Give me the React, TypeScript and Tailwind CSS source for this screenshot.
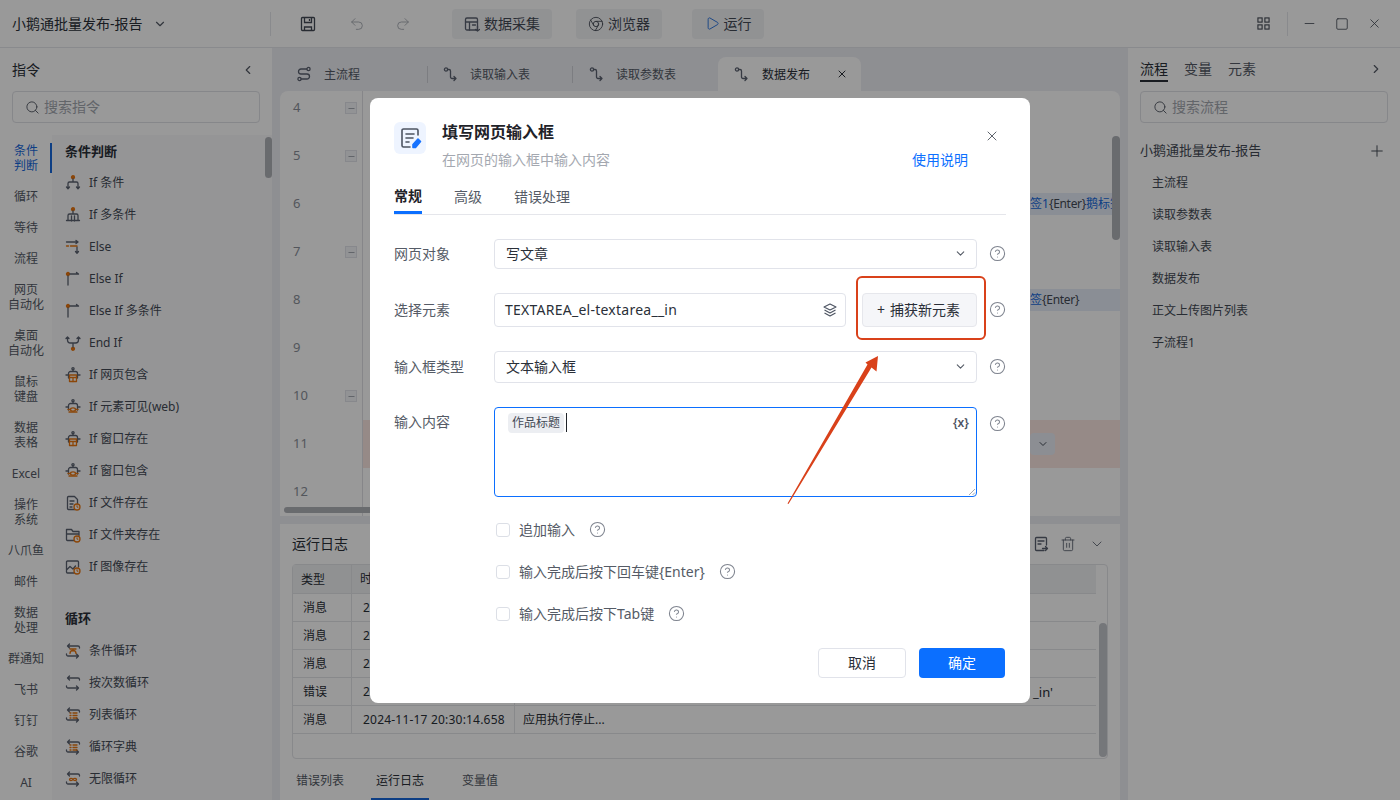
import React from "react";
import { ChevronDown, ChevronLeft, ChevronRight, Search, X, Minus, Square, Plus, CircleHelp, Undo2, Redo2, Trash2, Play, Chrome } from "lucide-react";

const O = "#e8750f";
const D = "#5b6270";

const Base = ({ children, size = 16, className = "" }: { children: React.ReactNode; size?: number; className?: string }) => (
  <svg width={size} height={size} viewBox="0 0 16 16" fill="none" stroke={D} strokeWidth="1.3" strokeLinecap="round" strokeLinejoin="round" className={"shrink-0 " + className}>
    {children}
  </svg>
);
const Robot = ({ kind }: { kind: "box" | "eye" }) => (
  <Base>
    <circle cx="8" cy="1.8" r="1.1" />
    <path d="M8 3v1.5M3.5 11V6.5a2 2 0 0 1 2-2h5a2 2 0 0 1 2 2V11M1 8h2.5M12.5 8H15" />
    {kind === "box" ? (
      <g stroke={O}><rect x="4.5" y="8" width="7" height="6.5" fill="#fff" /><path d="M4.5 10.5h7M8 10.5v4" /></g>
    ) : (
      <g stroke={O}><path d="M3 10.5h10M4 13h8" /><ellipse cx="8" cy="10.5" rx="2.5" ry="1.6" fill="#fff" /></g>
    )}
  </Base>
);
const FileBadge = ({ kind }: { kind: "file" | "folder" | "img" }) => (
  <Base>
    {kind === "file" && <path d="M10 14.5H3.5a1 1 0 0 1-1-1v-11a1 1 0 0 1 1-1h6l3 3v4M5 6h4M5 9h3M5 12h2" />}
    {kind === "folder" && <path d="M9 13.5H2.5a1 1 0 0 1-1-1v-10h5l1.5 2h6v4M1.5 7h12" />}
    {kind === "img" && <path d="M9 14H2.5a1 1 0 0 1-1-1V3a1 1 0 0 1 1-1h10a1 1 0 0 1 1 1v5M1.5 11l3.5-3.5 3 2.5 2.5-3" />}
    <circle cx="12" cy="12" r="3" stroke={O} fill="#fff" />
    <path d="M12 10.7v1.5h1" stroke={O} strokeWidth="1" />
  </Base>
);
const Loop = ({ inner }: { inner?: React.ReactNode }) => (
  <Base>
    <path d="M3 3h10a1.5 1.5 0 0 1 1.5 1.5V5M4.5 1 2.5 3l2 2M13 13H3a1.5 1.5 0 0 1-1.5-1.5V11M11.5 15l2-2-2-2" />
    {inner}
  </Base>
);
const listInner = <path d="M5 6h1M8 6h4M5 8.5h1M8 8.5h4M5 11h1M8 11h4" stroke={O} />;

const iconFor: Record<string, React.ReactNode> = {
  "If 条件": <Base><circle cx="8" cy="2.2" r="1.5" fill={O} stroke={O} /><path d="M8 4v3M3 13V8.5a1.5 1.5 0 0 1 1.5-1.5h7A1.5 1.5 0 0 1 13 8.5V13M1.5 12 3 13.7 4.5 12M11.5 12l1.5 1.7 1.5-1.7" /></Base>,
  "If 多条件": <Base><circle cx="8" cy="2.2" r="1.5" fill={O} stroke={O} /><path d="M8 4v3M3 13V8.5a1.5 1.5 0 0 1 1.5-1.5h7A1.5 1.5 0 0 1 13 8.5V13M6.5 9v5M9.5 9v5M1.5 13.5h13" /></Base>,
  Else: <Base><path d="M1.5 3H13l-2-1.6M13 3l-2 1.6M12 8v6M10.5 12.5 12 14.2l1.5-1.7" /><path d="M1.5 7h2M5.5 7H12" stroke={O} /></Base>,
  "Else If": <Base><circle cx="3" cy="3" r="1.5" fill={O} stroke={O} /><path d="M3 5v9M5 3h8M11.5 1.5 13.5 3" /></Base>,
  "Else If 多条件": <Base><circle cx="3" cy="3" r="1.5" fill={O} stroke={O} /><path d="M3 5v9M5 3h8M11.5 1.5 13.5 3" /></Base>,
  "End If": <Base><circle cx="8" cy="13.8" r="1.5" fill={O} stroke={O} /><path d="M8 12V9M2.5 2v3a3 3 0 0 0 3 3h5a3 3 0 0 0 3-3V2M1 3.5 2.5 2 4 3.5M12 3.5 13.5 2 15 3.5" /></Base>,
  "If 网页包含": <Robot kind="box" />,
  "If 元素可见(web)": <Robot kind="eye" />,
  "If 窗口存在": <Robot kind="box" />,
  "If 窗口包含": <Robot kind="eye" />,
  "If 文件存在": <FileBadge kind="file" />,
  "If 文件夹存在": <FileBadge kind="folder" />,
  "If 图像存在": <FileBadge kind="img" />,
  条件循环: <Loop inner={<path d="M5 6h6M8 6v2M5 10.5a3 3 0 0 1 6 0" stroke={O} />} />,
  按次数循环: <Loop />,
  列表循环: <Loop inner={listInner} />,
  循环字典: <Loop inner={listInner} />,
  无限循环: <Loop inner={<path d="M8 8.5c-1-1.5-3.5-1.5-3.5 0s2.5 1.5 3.5 0 3.5-1.5 3.5 0-2.5 1.5-3.5 0Z" stroke={O} />} />,
};

const Flow = () => (
  <Base><circle cx="3" cy="3.5" r="1.6" /><path d="M4.6 3.5H6a1.5 1.5 0 0 1 1.5 1.5v6A1.5 1.5 0 0 0 9 12.5h4M11 10.5l2 2-2 2" /></Base>
);
const MainFlow = () => (
  <Base><circle cx="12.5" cy="3" r="1.6" /><circle cx="3.5" cy="13" r="1.6" /><path d="M10.9 3H5a2.500 2.500 0 0 0 0 5h6a2.500 2.500 0 0 1 0 5H5.100" /></Base>
);

const Cat = ({ a, b, active }: { a: string; b?: string; active?: boolean }) => (
  <div className={`relative flex flex-col items-center justify-center text-xs leading-[15px] ${b ? "h-[46px]" : "h-[31px]"} ${active ? "text-[#1668dc]" : "text-[#555b66]"}`}>
    <span>{a}</span>
    {b && <span>{b}</span>}
    {active && <span className="absolute right-0 top-2 h-[30px] w-0.5 bg-[#1668dc]" />}
  </div>
);

const Item = ({ t }: { t: string }) => (
  <div className="flex h-8 items-center gap-2 pl-[13px] text-xs text-[#444a55]">
    {iconFor[t]}
    <span>{t}</span>
  </div>
);

const Help = () => <CircleHelp size={17} className="shrink-0 text-[#7f848f]" strokeWidth={1.5} />;
const HelpEnd = ({ cls = "" }: { cls?: string }) => <span className={"ml-3 " + cls}><Help /></span>;

const Label = ({ children }: { children: React.ReactNode }) => <div className="w-[100px] shrink-0 text-sm text-[#555b66]">{children}</div>;

const Check = ({ t }: { t: string }) => (
  <div className="flex h-[42px] items-center pl-[102px] text-sm text-[#555b66]">
    <div className="mr-[9px] h-3.5 w-3.5 rounded-[3px] border border-[#dcdfe6] bg-white" />
    <span>{t}</span>
    <span className="ml-[14px]"><Help /></span>
  </div>
);

const Sel = ({ t }: { t: string }) => (
  <div className="flex h-full flex-1 items-center justify-between rounded border border-[#e1e3ea] bg-white pl-[11px] pr-[9px] text-sm text-[#2a2f38]">
    <span>{t}</span>
    <ChevronDown size={13} className="text-[#555b66]" />
  </div>
);

const Row = ({ n, minus, chip, red }: { n: number; minus?: boolean; chip?: React.ReactNode; red?: boolean }) => (
  <div className="flex h-12 shrink-0">
    <div className="flex w-[83px] shrink-0 items-center justify-between border-r border-[#dfe0e5] pl-[13px] pr-[5px] text-[13px] text-[#8a8f99]">
      <span>{n}</span>
      {minus && <span className="flex h-3 w-3 items-center justify-center border border-[#e1e3ea] bg-[#f4f5f8]"><Minus size={9} /></span>}
    </div>
    <div className={`flex flex-1 items-center overflow-hidden ${red ? "justify-end bg-[#fbe6e2]" : ""}`}>
      {chip}
      {red && <span className="mr-[65px] flex h-[22px] w-[25px] items-center justify-center rounded bg-[#e9edf5]"><ChevronDown size={12} className="text-[#444a55]" /></span>}
    </div>
  </div>
);

const Chip = ({ children }: { children: React.ReactNode }) => (
  <div className="ml-auto flex h-[22px] w-[100px] items-center overflow-hidden whitespace-nowrap bg-[#e6edf9] pl-[10px] text-xs text-[#444a55]">{children}</div>
);

const logs = [
  ["消息", "2024-11-17 20:30:13.102", "应用开始执行..."],
  ["消息", "2024-11-17 20:30:13.518", "打开网页对象"],
  ["消息", "2024-11-17 20:30:13.904", "填写网页输入框"],
  ["错误", "2024-11-17 20:30:14.512", "未找到元素"],
  ["消息", "2024-11-17 20:30:14.658", "应用执行停止..."],
];

export default function App() {
  return (
    <div className="relative flex h-[800px] w-[1400px] flex-col overflow-hidden bg-white font-['Noto_Sans','Noto_Sans_CJK_SC',sans-serif] text-[#2a2f38]">
      {/* top bar */}
      <div className="flex h-12 shrink-0 items-center border-b border-[#e5e6eb]">
        <div className="flex h-6 w-[271px] shrink-0 items-center border-r border-[#e5e6eb] pl-3">
          <span className="text-sm">小鹅通批量发布-报告</span>
          <ChevronDown size={14} className="ml-2.5 text-[#555b66]" />
        </div>
        <div className="ml-[29px] flex items-center text-[#444a55]">
          <svg width="16" height="16" viewBox="0 0 16 16" fill="none" stroke="#444a55" strokeWidth="1.3"><path d="M2.5 1.5h11a1 1 0 0 1 1 1v11a1 1 0 0 1-1 1h-11a1 1 0 0 1-1-1v-11a1 1 0 0 1 1-1Z" /><path d="M4.5 2v4.5h7V2M9.5 3v2M4.5 14.5V11h7v3.5" /></svg>
          <Undo2 size={16} strokeWidth={1.3} className="ml-[33px] text-[#a4a8b0]" />
          <Redo2 size={16} strokeWidth={1.3} className="ml-[30px] text-[#a4a8b0]" />
        </div>
        <div className="ml-[41px] flex items-center text-sm text-[#444a55]">
          <div className="flex h-[30px] w-[100px] items-center justify-center gap-1 rounded bg-[#f2f3f6]">
            <Base><rect x="1.5" y="2" width="12" height="12" rx="1.5" /><path d="M1.5 6h12M5.5 6v8M8.5 9h3M13.5 10v5M11.5 13.5l2 1.5 2-1.5" /></Base>
            <span>数据采集</span>
          </div>
          <div className="ml-6 flex h-[30px] w-[86px] items-center justify-center gap-1 rounded bg-[#f2f3f6]">
            <Chrome size={16} strokeWidth={1.3} />
            <span>浏览器</span>
          </div>
          <div className="ml-[30px] flex h-[30px] w-[72px] items-center justify-center gap-1 rounded bg-[#f2f3f6]">
            <Play size={15} strokeWidth={1.4} className="text-[#1668dc]" />
            <span>运行</span>
          </div>
        </div>
        <div className="ml-auto flex items-center pr-[18px] text-[#444a55]">
          <svg width="13" height="13" viewBox="0 0 14 14" fill="none" stroke="#444a55" strokeWidth="1.2"><rect x="1" y="1" width="4.5" height="4.5" /><rect x="8.5" y="1" width="4.5" height="4.5" /><rect x="1" y="8.5" width="4.5" height="4.5" /><rect x="8.5" y="8.5" width="4.5" height="4.5" /></svg>
          <div className="ml-[17px] h-6 w-px bg-[#e5e6eb]" />
          <Minus size={15} strokeWidth={1.3} className="ml-[14px]" />
          <Square size={14} strokeWidth={1.4} className="ml-[18px]" />
          <X size={15} strokeWidth={1.3} className="ml-[18px]" />
        </div>
      </div>

      <div className="flex min-h-0 flex-1">
        {/* left */}
        <div className="flex w-[272px] shrink-0 flex-col">
          <div className="flex h-[43px] shrink-0 items-center justify-between pl-3 pr-[17px] pt-[1px] text-sm">
            <span>指令</span>
            <ChevronLeft size={14} className="text-[#555b66]" />
          </div>
          <div className="mx-3 flex h-8 shrink-0 items-center gap-1 rounded border border-[#dfe1e6] pl-3 text-sm text-[#a4a8b0]">
            <Search size={15} className="text-[#555b66]" strokeWidth={1.5} />
            <span>搜索指令</span>
          </div>
          <div className="mt-[12px] flex min-h-0 flex-1">
            <div className="w-[52px] shrink-0 overflow-hidden">
              <Cat a="条件" b="判断" active />
              <Cat a="循环" />
              <Cat a="等待" />
              <Cat a="流程" />
              <Cat a="网页" b="自动化" />
              <Cat a="桌面" b="自动化" />
              <Cat a="鼠标" b="键盘" />
              <Cat a="数据" b="表格" />
              <Cat a="Excel" />
              <Cat a="操作" b="系统" />
              <Cat a="八爪鱼" />
              <Cat a="邮件" />
              <Cat a="数据" b="处理" />
              <Cat a="群通知" />
              <Cat a="飞书" />
              <Cat a="钉钉" />
              <Cat a="谷歌" />
              <Cat a="AI" />
            </div>
            <div className="relative flex-1 overflow-hidden bg-[#f8f8fa]">
              <div className="flex h-8 items-center pl-[13px] pt-[2px] text-[13px] font-bold">条件判断</div>
              {["If 条件", "If 多条件", "Else", "Else If", "Else If 多条件", "End If", "If 网页包含", "If 元素可见(web)", "If 窗口存在", "If 窗口包含", "If 文件存在", "If 文件夹存在", "If 图像存在"].map((t) => (
                <Item key={t} t={t} />
              ))}
              <div className="mt-5 flex h-8 items-center pl-[13px] text-[13px] font-bold">循环</div>
              {["条件循环", "按次数循环", "列表循环", "循环字典", "无限循环"].map((t) => (
                <Item key={t} t={t} />
              ))}
              <div className="absolute right-0 top-[2px] h-[41px] w-[7px] rounded bg-[#b0b2b8]" />
            </div>
          </div>
        </div>

        {/* center */}
        <div className="flex min-w-0 flex-1 flex-col bg-[#edeef4]">
          <div className="flex h-[43px] shrink-0 items-end pl-2 text-xs text-[#555b66]">
            <div className="flex h-[34px] w-[148px] items-center pl-4"><MainFlow /><span className="ml-3 pt-px">主流程</span><span className="ml-auto h-[17px] w-px bg-[#cfd1d8]" /></div>
            <div className="flex h-[34px] w-[145px] items-center pl-[15px]"><Flow /><span className="ml-[11px] pt-px">读取输入表</span><span className="ml-auto h-[17px] w-px bg-[#cfd1d8]" /></div>
            <div className="flex h-[34px] w-[145px] items-center pl-4"><Flow /><span className="ml-[11px] pt-px">读取参数表</span></div>
            <div className="flex h-[34px] w-[143px] items-center rounded-t-lg bg-white pl-4 text-[#2a2f38]"><Flow /><span className="ml-3 pt-px">数据发布</span><X size={12} className="ml-[26px]" /></div>
          </div>
          <div className="relative mx-2 flex h-[425px] shrink-0 flex-col overflow-hidden rounded-t-lg bg-white">
            <div className="-mt-[7px] flex flex-col">
              <Row n={4} minus />
              <Row n={5} minus />
              <Row n={6} chip={<Chip><span className="text-[#1668dc]">签1</span><span className="tracking-[-0.3px]">{"{Enter}"}</span><span className="text-[#1668dc]">鹅标签</span></Chip>} />
              <Row n={7} minus />
              <Row n={8} chip={<Chip><span className="text-[#1668dc]">签</span><span className="tracking-[-0.3px]">{"{Enter}"}</span></Chip>} />
              <Row n={9} />
              <Row n={10} minus />
              <Row n={11} red />
              <Row n={12} />
            </div>
            <div className="absolute bottom-[3px] left-1 h-[6px] w-[400px] rounded bg-[#b0b2b8]" />
            <div className="absolute right-0 top-[45px] h-[104px] w-[8px] rounded bg-[#b0b2b8]" />
          </div>
          <div className="mx-2 mt-2 flex min-h-0 flex-1 flex-col bg-white px-3">
            <div className="flex h-10 shrink-0 items-center justify-between text-sm">
              <span>运行日志</span>
              <div className="flex items-center gap-[11px] pr-[3px]">
                <Base><path d="M11 14.5H3.5a1 1 0 0 1-1-1v-11a1 1 0 0 1 1-1h9a1 1 0 0 1 1 1V9M5 5h6M5 8h3M9.5 12.5h5M12.5 10.5l2 2-2 2" /></Base>
                <Trash2 size={16} strokeWidth={1.3} className="text-[#5b6270]" />
                <ChevronDown size={16} strokeWidth={1.3} className="ml-[2px] text-[#5b6270]" />
              </div>
            </div>
            <div className="relative flex h-[195px] shrink-0 flex-col rounded border border-[#e3e4e8] text-xs">
              <div className="flex h-[29px] w-[803px] shrink-0 items-center border-b border-[#e3e4e8] bg-[#f1f2f4]">
                <div className="w-[59px] border-r border-[#e3e4e8] pl-2 leading-[29px]">类型</div>
                <div className="pl-2">时间</div>
              </div>
              {logs.map((r) => (
                <div key={r[1]} className="flex h-7 w-[803px] shrink-0 items-center border-b border-[#e3e4e8]">
                  <div className="w-[59px] border-r border-[#e3e4e8] pl-[10px] leading-[27px]">{r[0]}</div>
                  <div className="w-[163px] border-r border-[#e3e4e8] pl-[11px] leading-[27px] tracking-[0.2px]">{r[1]}</div>
                  <div className="flex flex-1 justify-between pl-2 pr-[43px]"><span>{r[2]}</span>{r[0] === "错误" && <span className="text-[13px] leading-[18px]">_in'</span>}</div>
                </div>
              ))}
              <div className="absolute bottom-[1px] right-0 h-[134px] w-2 rounded bg-[#c4c6cc]" />
            </div>
            <div className="mt-[9px] flex h-[32px] items-start text-xs text-[#555b66]">
              <div className="ml-1 flex h-8 items-center pb-[6px]">错误列表</div>
              <div className="ml-[27px] flex h-8 w-[58px] items-center justify-center border-b-2 border-[#1668dc] pb-1 text-[#2a2f38]">运行日志</div>
              <div className="ml-[33px] flex h-8 items-center pb-[6px]">变量值</div>
            </div>
          </div>
        </div>

        {/* right */}
        <div className="flex w-[272px] shrink-0 flex-col px-3">
          <div className="flex h-[43px] shrink-0 items-start gap-4 pt-[11px] text-sm text-[#555b66]">
            <span className="border-b-2 border-[#2a2f38] pb-px text-[#2a2f38]">流程</span>
            <span>变量</span>
            <span>元素</span>
            <ChevronRight size={14} className="ml-auto mr-[5px] mt-[3px]" />
          </div>
          <div className="flex h-8 shrink-0 items-center gap-1 rounded border border-[#dfe1e6] pl-3 text-sm text-[#a4a8b0]">
            <Search size={15} className="text-[#555b66]" strokeWidth={1.5} />
            <span>搜索流程</span>
          </div>
          <div className="mt-[12px] flex h-8 items-center justify-between text-[13px] text-[#444a55]">
            <span>小鹅通批量发布-报告</span>
            <Plus size={18} strokeWidth={1.3} className="mr-[2px]" />
          </div>
          {["主流程", "读取参数表", "读取输入表", "数据发布", "正文上传图片列表", "子流程1"].map((t) => (
            <div key={t} className="flex h-8 items-center pl-3 text-xs text-[#444a55]">{t}</div>
          ))}
        </div>
      </div>

      {/* modal */}
      <div className="absolute inset-0 flex items-center justify-center bg-black/40">
        <div className="flex h-[605px] w-[660px] flex-col rounded-lg bg-white px-6 pt-6">
          <div className="flex h-[52px] shrink-0">
            <div className="flex h-8 w-8 items-center justify-center rounded-md bg-[#eef4ff]">
              <svg width="24" height="24" viewBox="0 0 24 24" fill="none" stroke="#4d5462" strokeWidth="1.6" strokeLinecap="round" strokeLinejoin="round">
                <path d="M20 9V4.5A1.5 1.5 0 0 0 18.5 3h-13A1.5 1.5 0 0 0 4 4.500v15A1.500 1.500 0 0 0 5.500 21H12M8 8h8M8 12h7M8 16h3" />
                <path d="M15 21.500v-3l5-5.500 2.500 2.500-5 6Z" fill="#1672ff" stroke="#1672ff" />
              </svg>
            </div>
            <div className="ml-4 flex flex-1 flex-col">
              <div className="h-5 text-base font-bold leading-5 text-[#1f2329]">填写网页输入框</div>
              <div className="mt-[7px] text-sm leading-[21px] text-[#a4a8b0]">在网页的输入框中输入内容</div>
            </div>
            <div className="flex flex-col items-end pr-[6px]">
              <X size={16} strokeWidth={1.3} className="mt-[6px] text-[#444a55]" />
              <div className="mr-[32px] mt-[5px] text-sm leading-[21px] text-[#0b6fff]">使用说明</div>
            </div>
          </div>
          <div className="mt-[10px] flex h-[31px] shrink-0 border-b border-[#e5e6eb] text-sm text-[#555b66]">
            <span className="flex h-[30px] w-7 items-center justify-center whitespace-nowrap border-b-[3px] border-[#0b6fff] pb-[3px] font-bold text-[#1f2329]">常规</span>
            <span className="ml-8 pt-[3px]">高级</span>
            <span className="ml-8 pt-[3px]">错误处理</span>
          </div>
          <div className="mt-6 flex h-[30px] shrink-0 items-center">
            <Label>网页对象</Label>
            <Sel t="写文章" />
            <HelpEnd />
          </div>
          <div className="mt-6 flex h-[34px] shrink-0 items-center">
            <Label>选择元素</Label>
            <div className="flex h-full w-[352px] items-center justify-between rounded border border-[#e1e3ea] pl-[10px] pr-[8px] text-sm tracking-[0.25px] text-[#2a2f38]">
              <span>TEXTAREA_el-textarea__in</span>
              <svg width="14" height="14" viewBox="0 0 14 14" fill="none" stroke="#4d5462" strokeWidth="1.1" strokeLinejoin="round"><path d="M7 1 13 4 7 7 1 4ZM1.5 7 7 10l5.5-3M1.5 10 7 13l5.5-3" /></svg>
            </div>
            <div className="ml-4 flex h-full flex-1 items-center justify-center gap-[5px] rounded border border-[#e6e7ec] bg-[#f5f6f9] pr-[2px] text-sm text-[#2a2f38]"><span>+</span><span>捕获新元素</span></div>
            <HelpEnd />
          </div>
          <div className="mt-6 flex h-8 shrink-0 items-center">
            <Label>输入框类型</Label>
            <Sel t="文本输入框" />
            <HelpEnd />
          </div>
          <div className="mt-6 flex h-[90px] shrink-0 items-start">
            <div className="pt-[5px]"><Label>输入内容</Label></div>
            <div className="relative h-full flex-1 rounded border border-[#0b6fff] pl-[13px] pt-[5px] pr-[7px]">
              <div className="flex items-center">
                <span className="flex h-5 items-center rounded-sm bg-[#eceef2] px-1 text-xs text-[#444a55]">作品标题</span>
                <span className="ml-[2px] h-[19px] w-px bg-[#1f2329]" />
                <span className="ml-auto text-xs font-semibold text-[#4d5462]">{"{x}"}</span>
              </div>
              <svg className="absolute bottom-0 right-0" width="8" height="8" viewBox="0 0 8 8" stroke="#9a9ea6" strokeWidth="0.9"><path d="M1 7 7 1M4.5 7 7 4.5" /></svg>
            </div>
            <HelpEnd cls="mt-2" />
          </div>
          <div className="mt-3">
            <Check t="追加输入" />
            <Check t="输入完成后按下回车键{Enter}" />
            <Check t="输入完成后按下Tab键" />
          </div>
          <div className="mt-[13px] flex justify-end gap-[13px] pr-px text-sm">
            <div className="flex h-[30px] w-[88px] items-center justify-center rounded border border-[#e1e3ea] text-[#2a2f38]">取消</div>
            <div className="flex h-[30px] w-[86px] items-center justify-center rounded bg-[#0b6fff] text-white">确定</div>
          </div>
        </div>
      </div>

      {/* annotations */}
      <div className="absolute left-[856px] top-[276px] h-[64px] w-[130px] rounded-md border-2 border-[#d9411a]" />
      <svg className="absolute left-0 top-0" width="1400" height="800" viewBox="0 0 1400 800">
        <polygon points="878,356 876.5,371.5 871.5,367.5 788.5,504 787.5,503.5 867.5,364.5 865.5,362.5" fill="#d9411a" />
      </svg>
    </div>
  );
}
